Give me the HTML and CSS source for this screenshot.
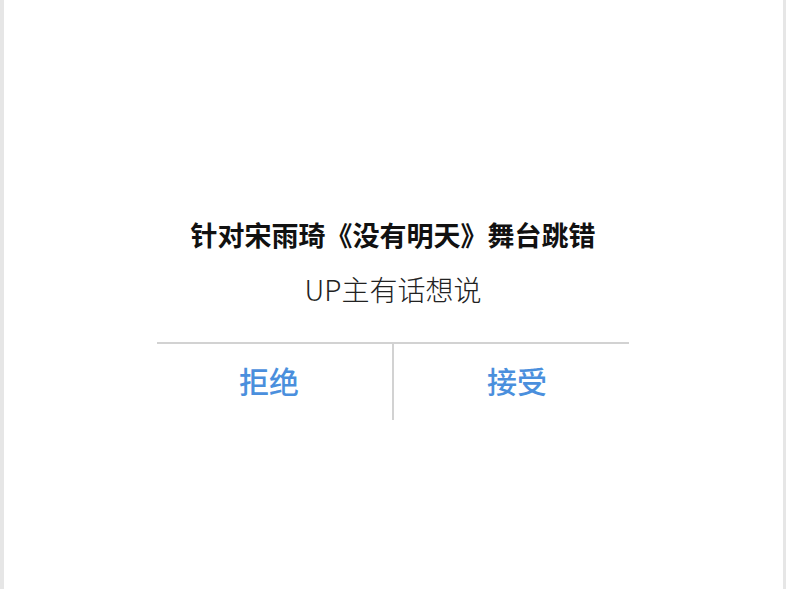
FILE: index.html
```html
<!DOCTYPE html>
<html lang="zh-CN">
<head>
    <meta charset="UTF-8">
    <meta name="viewport" content="width=device-width, initial-scale=1.0">
    <title>UP主有话想说</title>
    <link rel="stylesheet" href="styles.css">
</head>
<body>
    <div class="page">
        <div class="dialog">
            <div class="dialog-title">针对宋雨琦《没有明天》舞台跳错</div>
            <div class="dialog-text">UP主有话想说</div>
            <div class="dialog-actions">
                <button class="dialog-btn btn-left">拒绝</button>
                <button class="dialog-btn btn-right">接受</button>
            </div>
        </div>
    </div>
</body>
</html>
```

FILE: styles.css
```css
html, body { margin: 0; padding: 0; height: 100%; }
body { font-family: "Noto Sans CJK SC", "Noto Sans", sans-serif; background-color: #fff; }

/* franjas grises a los lados */
.page {
    box-sizing: border-box;
    height: 589px;
    border-left: 4px solid #e6e6e6;
    border-right: 3px solid #e6e6e6;
    display: flex;
    justify-content: center;
    padding-top: 217px;
}

.dialog { width: 472px; margin-left: -1px; }
.dialog-title { font-size: 27px; font-weight: 700; line-height: 36px; text-align: center; color: #111; }
.dialog-text { font-size: 28px; font-weight: 300; line-height: 36px; text-align: center; color: #222; margin-top: 18px; }

.dialog-actions { display: flex; margin-top: 35px; border-top: 2px solid #d2d2d2; }
.dialog-btn {
    flex: 1;
    height: 76px;
    padding: 0 0 4px;
    background: none;
    border: none;
    font-family: inherit;
    font-size: 30px;
    font-weight: 500;
    color: #4a8fdd;
    cursor: pointer;
}
.btn-left { padding-right: 11px; }
.btn-right { padding-left: 11px; border-left: 2px solid #d2d2d2; }
```
